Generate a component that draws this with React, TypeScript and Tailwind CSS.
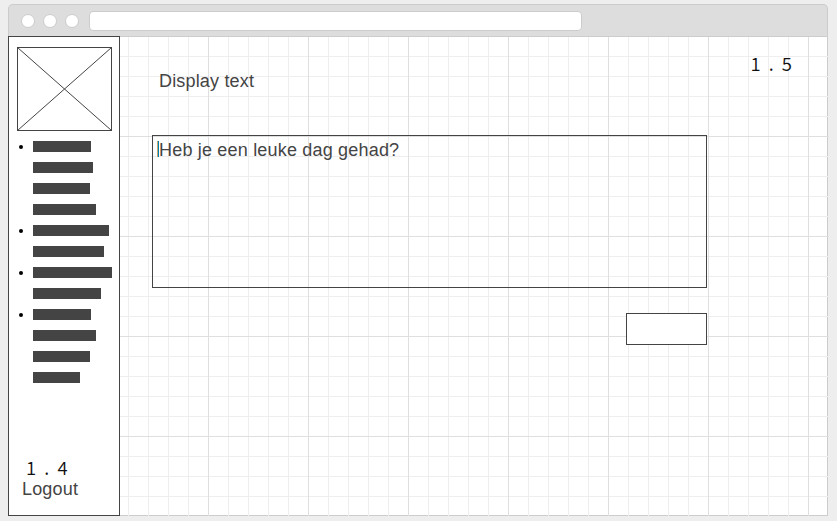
const bars = [
  { w: "w-[58px]", dot: true },
  { w: "w-[60px]", dot: false },
  { w: "w-[57px]", dot: false },
  { w: "w-[63px]", dot: false },
  { w: "w-[76px]", dot: true },
  { w: "w-[71px]", dot: false },
  { w: "w-[79px]", dot: true },
  { w: "w-[68px]", dot: false },
  { w: "w-[58px]", dot: true },
  { w: "w-[63px]", dot: false },
  { w: "w-[57px]", dot: false },
  { w: "w-[47px]", dot: false },
];

function Sidebar() {
  return (
    <aside className="relative flex h-[480px] w-28 shrink-0 flex-col border border-[#444] bg-white">
      <svg className="mt-[10px] ml-2 block h-[84px] w-[95px] shrink-0" viewBox="0 0 95 84" fill="none" stroke="#444">
        <rect x="0.5" y="0.5" width="94" height="83" />
        <path d="M0.5 0.5L94.5 83.5M94.5 0.5L0.5 83.5" />
      </svg>
      <ul className="mt-[10px] flex flex-col gap-[10px]">
        {bars.map((bar, i) => (
          <li key={i} className="flex h-[11px] items-center">
            <span className="flex w-6 shrink-0 pl-[10px]">
              {bar.dot && <span className="size-1 rounded-full bg-black" />}
            </span>
            <span className={`h-[11px] shrink-0 bg-[#444] ${bar.w}`} />
          </li>
        ))}
      </ul>
      <div className="mt-[74px] ml-[17px] h-5 font-['Noto_Sans_CJK_SC',sans-serif] text-[18.5px] leading-5 font-[350] tracking-[2px] whitespace-pre text-[#111]">1 . 4</div>
      <div className="mt-[2px] ml-[13px] font-['Liberation_Sans',sans-serif] text-[18px] leading-5 tracking-[0.17px] text-[#444]">Logout</div>
    </aside>
  );
}

function GridLines() {
  const minor = "#eee";
  const major = "#dfdfdf";
  const cols = Array.from({ length: 41 }, (_, i) => i);
  const rows = Array.from({ length: 23 }, (_, i) => i + 1);
  return (
    <svg className="pointer-events-none absolute top-0 left-0 h-[480px] w-[821px]" viewBox="0 0 821 480" shapeRendering="crispEdges">
      {cols.map((c) => (
        <rect key={`c${c}`} x={c * 20} y="1" width="1" height="479" fill={c % 5 === 0 ? major : minor} />
      ))}
      {rows.map((r) => (
        <rect key={`r${r}`} x="0" y={r * 20} width="820" height="1" fill={minor} />
      ))}
      {rows.filter((r) => r % 5 === 0).map((r) => (
        <rect key={`m${r}`} x="0" y={r * 20} width="821" height="1" fill={major} />
      ))}
      {cols.filter((c) => c % 5 === 0).map((c) => (
        <rect key={`n${c}`} x={c * 20} y="1" width="1" height="479" fill={major} />
      ))}
    </svg>
  );
}

export default function App() {
  return (
    <div className="h-[521px] w-[837px] overflow-hidden bg-[#eee] pt-1 pl-2">
      <div className="w-[820px]">
        <header className="flex h-8 items-center rounded-t-[5px] border border-b-0 border-[#ccc] bg-[#ddd] pl-3">
          <div className="flex gap-2">
            <span className="size-[14px] rounded-full border border-[#ccc] bg-white" />
            <span className="size-[14px] rounded-full border border-[#ccc] bg-white" />
            <span className="size-[14px] rounded-full border border-[#ccc] bg-white" />
          </div>
          <div className="ml-[10px] h-5 w-[493px] rounded-[4px] border border-[#ccc] bg-white" />
        </header>
        <div className="relative flex h-[480px] w-[820px] bg-white">
          <div className="absolute inset-0 border border-[#ccc]" />
          <GridLines />
          <Sidebar />
          <main className="relative flex w-[708px] flex-col pl-8">
            <div className="flex h-[99px] justify-between pr-[34px] pl-[7px]">
              <h1 className="pt-[35px] font-['Liberation_Sans',sans-serif] text-[18px] leading-5 tracking-[0.17px] text-[#444]">Display text</h1>
              <div className="pt-[17px] font-['Noto_Sans_CJK_SC',sans-serif] text-[18.5px] leading-5 font-[350] tracking-[2px] whitespace-pre text-[#111]">1 . 5</div>
            </div>
            <div className="flex h-[153px] w-[555px] border border-[#444] pt-1 pl-1">
              <span className="mt-px h-4 w-[2px] border-l border-[#c9a870] bg-[#0080b0]" />
              <p className="font-['Liberation_Sans',sans-serif] text-[18px] leading-5 tracking-[0.19px] text-[#444]">Heb je een leuke dag gehad?</p>
            </div>
            <div className="mt-[25px] ml-[474px] h-8 w-[81px] border border-[#444] bg-white" />
          </main>
        </div>
      </div>
    </div>
  );
}
